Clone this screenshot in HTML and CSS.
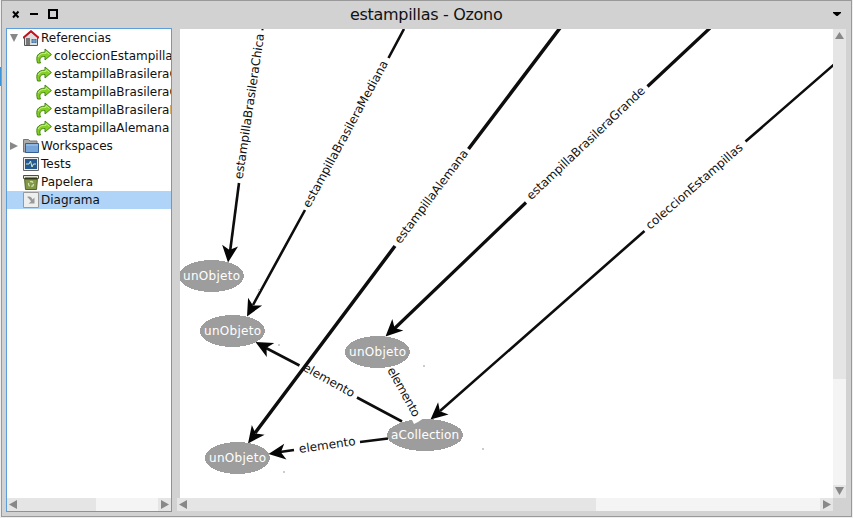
FILE: index.html
```html
<!DOCTYPE html>
<html lang="es">
<head>
<meta charset="utf-8">
<title>estampillas - Ozono</title>
<link rel="stylesheet" href="styles.css">
</head>
<body>
<svg class="defs" width="0" height="0">
  <symbol id="share" viewBox="0 0 16 16"><path d="M1.500 15C-.6 8 2 4.200 9 4.200V1L15.400 6.500 9 12V8.600C4.500 8.200 2.800 10.500 4.500 15Z" fill="#83d020" stroke="#458613"/><path d="M2.300 9C3.500 5.800 6 5.300 10 5.300V3.500L13.500 6.500" fill="none" stroke="#c9f284"/></symbol>
</svg>
<main class="window">
  <header class="titlebar">
    <svg class="controls" width="60" height="28" viewBox="0 0 60 28"><path d="M11 11.500l5.500 6M16.500 11.500l-5.500 6" stroke="#000" stroke-width="2"/><path d="M28 14h8" stroke="#000" stroke-width="2"/><path d="M47 10h8v8h-8z" fill="none" stroke="#000" stroke-width="2"/></svg>
    <h1 class="title">estampillas - Ozono</h1>
    <svg class="menu" width="20" height="28" viewBox="0 0 20 28"><path d="M1 12h8v1L5.500 16h-1L1 13z"/></svg>
  </header>
  <div class="content">
    <aside class="tree">
      <ul class="items">
        <li class="row"><svg class="twist" width="8" height="8"><path d="M0 0h8L4 8z" fill="#888"/></svg><svg class="icon" viewBox="0 0 16 16"><path d="M1.500 7.500L8 2l6.500 5.500v8h-13z" fill="#ddd" stroke="#555"/><path d="M0 8L8 1l8 7" fill="none" stroke="#c8101c" stroke-width="1.700"/><path d="M3 8h4v7H3z" fill="#777"/><path d="M8.500 9h5v4h-5z" fill="#4977ad"/><path d="M11 9v4M8.500 11h5" stroke="#9db4d0" stroke-width=".7"/></svg><span>Referencias</span></li>
        <li class="row child"><svg class="icon"><use href="#share"/></svg><span>coleccionEstampillas</span></li>
        <li class="row child"><svg class="icon"><use href="#share"/></svg><span>estampillaBrasileraChica</span></li>
        <li class="row child"><svg class="icon"><use href="#share"/></svg><span>estampillaBrasileraGrande</span></li>
        <li class="row child"><svg class="icon"><use href="#share"/></svg><span>estampillaBrasileraMediana</span></li>
        <li class="row child"><svg class="icon"><use href="#share"/></svg><span>estampillaAlemana</span></li>
        <li class="row"><svg class="twist" width="8" height="8"><path d="M0 0v8l8-4z" fill="#888"/></svg><svg class="icon" viewBox="0 0 16 16"><path d="M.5 14V1.500h5L7 3h7v11z" fill="#aaa" stroke="#777"/><path d="M2.500 5.500h13v9h-13z" fill="#79a6d8" stroke="#355f96"/><path d="M3 7h12" stroke="#a9c9ea"/></svg><span>Workspaces</span></li>
        <li class="row"><i class="twist"></i><svg class="icon" viewBox="0 0 16 16"><path d="M.5 1.500h15v13H.5z" fill="#eee" stroke="#666"/><path d="M2 3h12v10H2z" fill="#255a91"/><path d="M3 8h3l1.500-3L9 11l1.500-3H13" fill="none" stroke="#d7efbf"/></svg><span>Tests</span></li>
        <li class="row"><i class="twist"></i><svg class="icon" viewBox="0 0 16 16"><path d="M1.500 4h13l-1 11.500h-11z" fill="#819846" stroke="#53622c"/><path d="M.5 1.500h15v3H.5z" fill="#e2e5d4" stroke="#4c5039"/><path d="M2 4.500h12" stroke="#32381c" stroke-width="2"/><circle cx="8" cy="10" r="2.500" fill="none" stroke="#d0ddb0" stroke-width="1.300" stroke-dasharray="3.500 1.700"/></svg><span>Papelera</span></li>
        <li class="row selected"><i class="twist"></i><svg class="icon" viewBox="0 0 16 16"><path d="M.5.5h15v15H.5z" fill="#eee" stroke="#999"/><path d="M4 5c3-1 4.500 0 5.500 2.500L11.500 5.500v6H5.500L8 9.500C7 7.500 5.500 6 4 5z" fill="#999"/></svg><span>Diagrama</span></li>
      </ul>
      <div class="hbar"><div class="thumb left-thumb"></div><svg class="arrow" width="13" height="13"><path d="M10 2v9L2 6.500z" fill="#888"/></svg><svg class="arrow end" width="13" height="13"><path d="M3 2v9l8-4.500z" fill="#888"/></svg></div>
    </aside>
    <section class="pane">
      <svg class="diagram" viewBox="180 29 653 469">
        <defs><path id="head" d="M0 0L-17-8L-12.500 0L-17 8Z"/></defs>
        <g class="edges">
          <path d="M261.500 29h2" stroke-width="3"/>
          <path d="M239 183L230 252"/>
          <path d="M404 29L388.500 58M305 210L253 305"/>
          <path class="bold" d="M560 28L468.500 149M395 246L255 433"/>
          <path class="medium" d="M710 28L647.500 86.500M526 202.500L394 329"/>
          <path d="M834 64.500L745.500 141.500M644.500 231L440 411"/>
          <path d="M402 421.500L357 397.500M299.500 365.500L266 348"/>
          <path d="M388 438.500L360 442M294 450L280 452"/>
        </g>
        <g class="heads">
          <use href="#head" transform="translate(228 262.500) rotate(97)"/>
          <use href="#head" transform="translate(247 316.500) rotate(118.500)"/>
          <use href="#head" transform="translate(248 443.500) rotate(127)"/>
          <use href="#head" transform="translate(385.500 336.500) rotate(136.500)"/>
          <use href="#head" transform="translate(430.500 419.500) rotate(139)"/>
          <use href="#head" transform="translate(255.500 342) rotate(208)"/>
          <use href="#head" transform="translate(268.500 454) rotate(172)"/>
        </g>
        <g class="nodes">
          <ellipse cx="211.500" cy="276" rx="32.500" ry="16"/><ellipse cx="232.500" cy="331" rx="32.500" ry="16"/>
          <ellipse cx="377.500" cy="352" rx="32.500" ry="16"/><ellipse cx="237.500" cy="458" rx="32.500" ry="16"/>
          <ellipse cx="425" cy="435" rx="38" ry="16"/>
        </g>
        <path d="M412 417v3l2 4 4-2 6-4v-1z" fill="#fff"/>
        <g class="names">
          <text x="183" y="280" textLength="57">unObjeto</text><text x="204" y="335" textLength="57">unObjeto</text>
          <text x="349" y="356" textLength="57">unObjeto</text><text x="209" y="462" textLength="57">unObjeto</text>
          <text x="391" y="439" textLength="68">aCollection</text>
        </g>
        <g class="labels">
          <text y="4" textLength="147" transform="translate(238.500 179) rotate(-81.500)">estampillaBrasileraChica</text>
          <text y="4" textLength="165" transform="translate(306 206.500) rotate(-61.500)">estampillaBrasileraMediana</text>
          <text y="4" textLength="114" transform="translate(397 242) rotate(-53)">estampillaAlemana</text>
          <text y="4" textLength="158" transform="translate(528.500 197.500) rotate(-43.500)">estampillaBrasileraGrande</text>
          <text y="4" textLength="124" transform="translate(647.500 227) rotate(-41)">coleccionEstampillas</text>
          <text y="4" textLength="57" transform="translate(304 366.500) rotate(29)">elemento</text>
          <text y="4" textLength="57" transform="translate(299 449) rotate(-8)">elemento</text>
          <text y="4" textLength="55" transform="translate(390.500 368) rotate(61)">elemento</text>
        </g>
        <path d="M258 289h2v2h-2zM278 344h2v2h-2zM423 365h2v2h-2zM283 471h2v2h-2zM482 448h2v2h-2z" fill="#ccc"/>
      </svg>
      <div class="vbar"><div class="vthumb"></div><svg class="arrow" width="13" height="13"><path d="M6.500 3L11 10H2z" fill="#888"/></svg><svg class="arrow end" width="13" height="13"><path d="M2 2h9L6.500 10z" fill="#888"/></svg></div>
      <div class="hbar wide"><div class="thumb wide-thumb"></div><svg class="arrow" width="13" height="13"><path d="M10 2v9L2 6.500z" fill="#888"/></svg><svg class="arrow end" width="13" height="13"><path d="M3 2v9l8-4.500z" fill="#888"/></svg></div>
    </section>
  </div>
</main>
</body>
</html>
```
FILE: styles.css
```css
* { box-sizing: border-box; }
body { margin: 0; width: 853px; height: 518px; padding-left: 1px; overflow: hidden; font: 12px "DejaVu Sans", sans-serif; background: linear-gradient(#3d95d5, #3d95d5) 0 67px / 1px 19px no-repeat #eee; }
.defs { position: absolute; }
.window { width: 851px; height: 517px; background: #d2d2d2; border: 1px solid #999; display: flex; flex-direction: column; }
.titlebar { height: 27px; flex: none; display: grid; grid-template-columns: 60px 1fr 20px; }
.controls { margin: -1px 0 0 -.5px; }
.title { margin: 0; font-size: 16px; font-weight: 400; line-height: 27px; white-space: nowrap; letter-spacing: -.3px; padding-left: 288px; color: #111; }
.menu { margin: -1px 0 0 1px; }
.content { display: flex; gap: 5px; padding-left: 4px; }
.tree { width: 166px; height: 484px; border: 1px solid #5e9ddc; background: #fff; display: flex; flex-direction: column; justify-content: space-between; overflow: hidden; }
.items { margin: 0; padding: 0; list-style: none; }
.row { height: 18px; display: flex; align-items: center; white-space: nowrap; padding-left: 3px; color: #111; font-size: 12px; line-height: 18px; }
.row.child { padding-left: 29px; }
.row.selected { background: #b0d3f8; }
.twist { width: 8px; height: 8px; margin-right: 5px; flex: none; }
.icon { width: 16px; height: 16px; margin-right: 2px; flex: none; }
.hbar { display: flex; justify-content: space-between; position: relative; height: 13px; background: #f4f4f4; }
.arrow { display: block; background: #e5e5e5; z-index: 1; }
.thumb { position: absolute; left: 0; top: 0; height: 13px; background: #e5e5e5; }
.left-thumb { width: 89px; }
.pane { width: 669px; height: 483px; margin-top: 1px; display: grid; grid-template-columns: 3px 653px 13px; grid-template-rows: 469px 13px; }
.diagram { grid-column: 2; width: 653px; height: 469px; background: #fff; overflow: hidden; }
.edges path { fill: none; stroke: #0d0d0d; stroke-width: 2.6; }
.edges .bold { stroke-width: 3.5; }
.edges .medium { stroke-width: 3.2; }
.heads { fill: #050505; }
.nodes { fill: #9d9d9d; shape-rendering: crispEdges; }
.names { fill: #fff; font-size: 12px; }
.labels { fill: #111; font-size: 12px; }
.vbar { grid-column: 3; position: relative; display: flex; flex-direction: column; justify-content: space-between; background: #f4f4f4; }
.vthumb { position: absolute; width: 13px; height: 350px; background: #e5e5e5; }
.wide { grid-column: 1 / 3; }
.wide-thumb { width: 419px; }
```
